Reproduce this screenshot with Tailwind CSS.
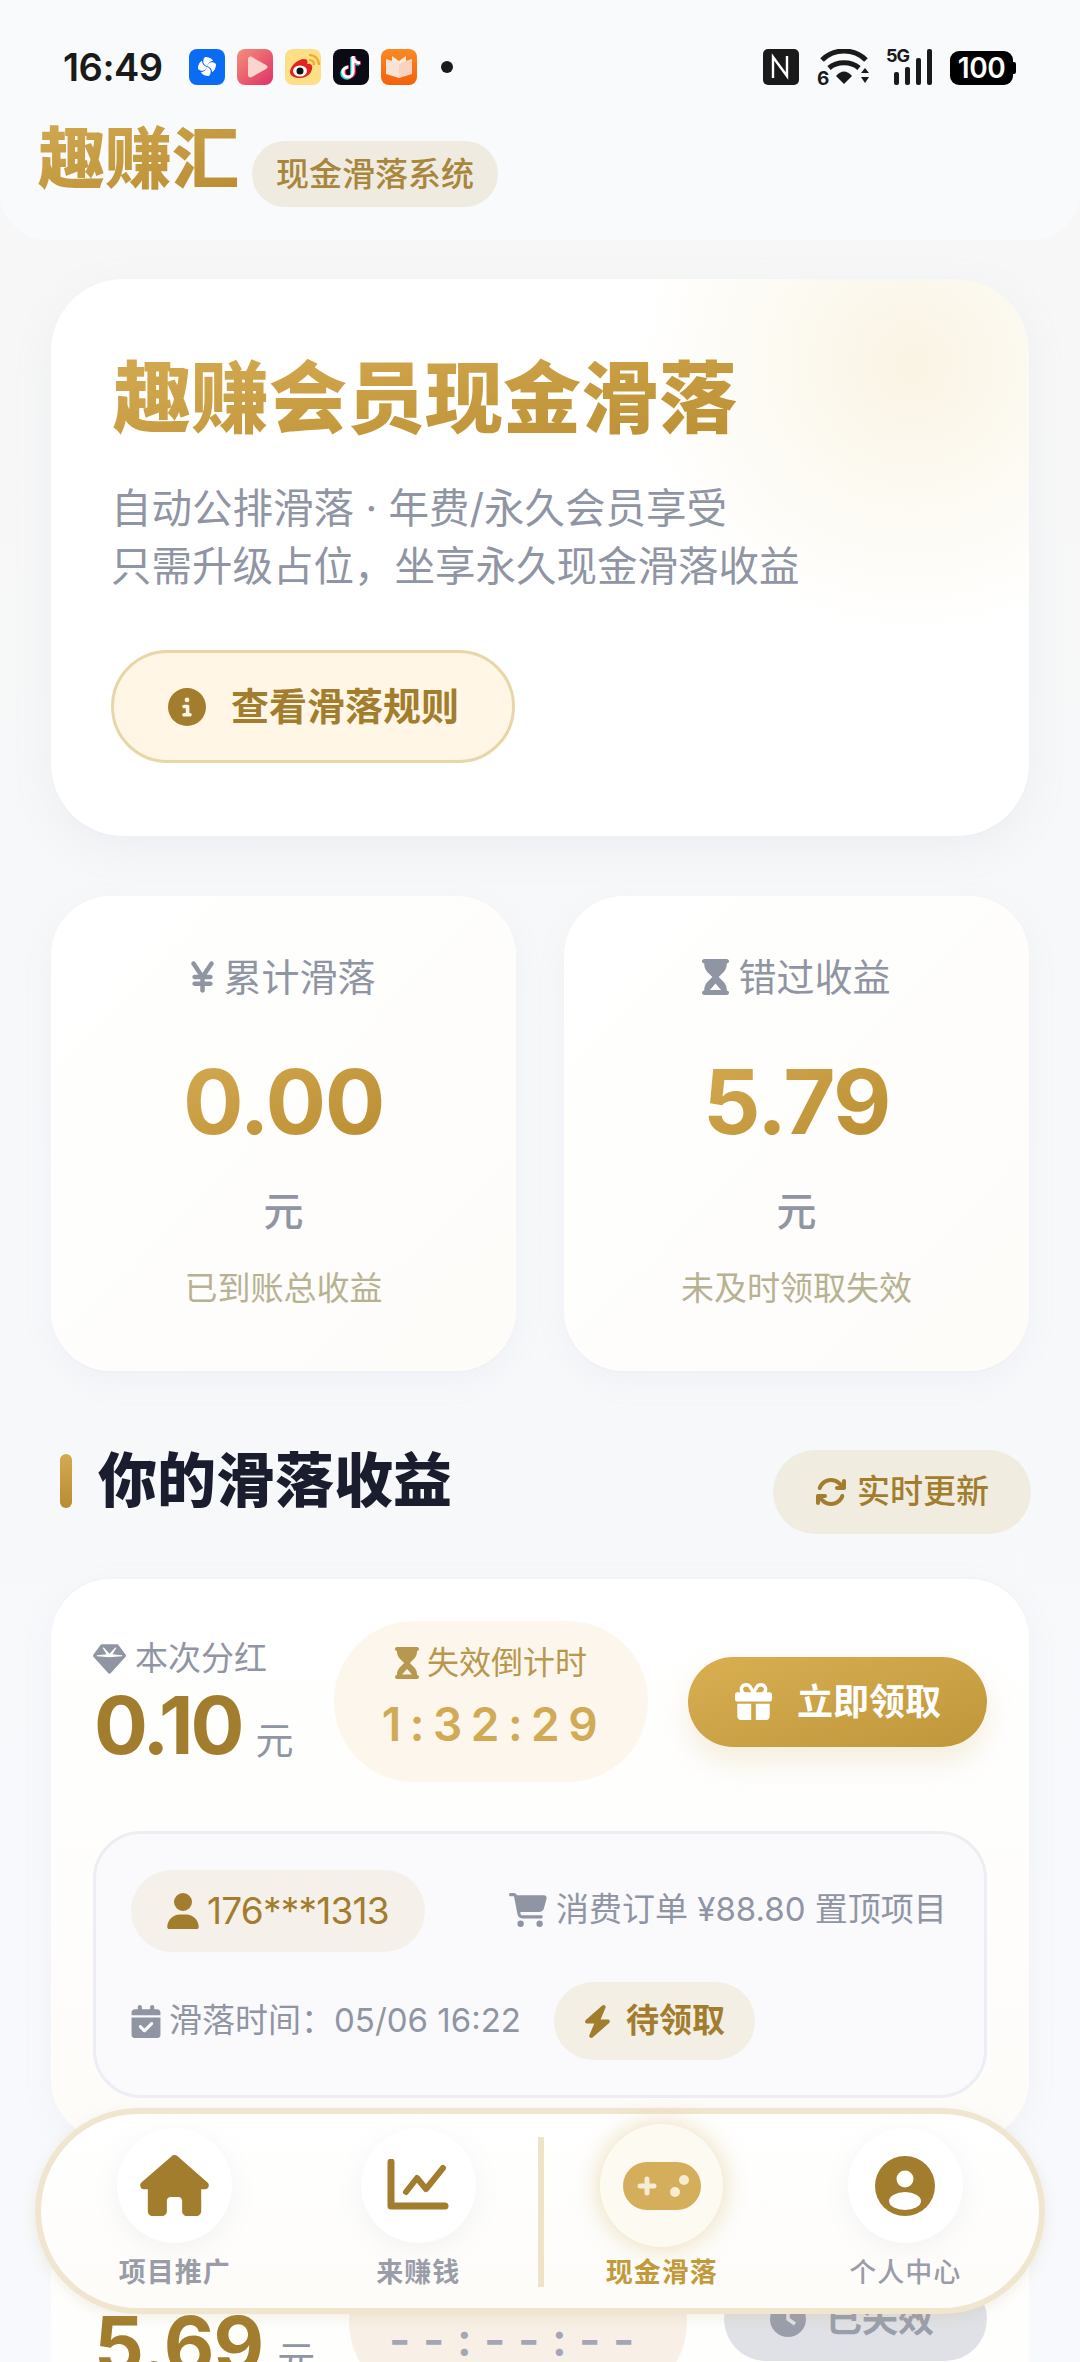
<!DOCTYPE html>
<html lang="zh">
<head>
<meta charset="utf-8">
<script src="https://cdn.jsdelivr.net/npm/@tailwindcss/browser@4"></script>
</head>
<body class="m-0">
<div class="relative w-[1080px] h-[2362px] overflow-hidden bg-linear-to-b from-[#f7f7f6] via-[#f7f8fa] to-[#f8f9fc] font-['Inter','Noto_Sans_CJK_SC',sans-serif]">

  <!-- header -->
  <header class="h-[240px] bg-[#f9fafc] rounded-b-[48px] pl-[38px]">
    <div class="h-[110px] flex items-start pt-[49px] relative">
      <span class="w-[126px] ml-[25px] h-[36px] leading-[36px] text-[38px] font-semibold text-[#1a1a1a] tracking-[-0.5px]">16:49</span>
      <div class="flex gap-[12px]">
        <svg class="w-[36px] h-[36px]" viewBox="0 0 36 36"><rect width="36" height="36" rx="8" fill="#0a6cf5"/><g fill="#fff"><path d="M18 17c-4-1-5-6-2-9 3 0 7 1 8 4-3 0-5 2-6 5z"/><path d="M18 17c1-4 6-5 9-2 0 3-1 7-4 8 0-3-2-5-5-6z"/><path d="M18 18c4 1 5 6 2 9-3 0-7-1-8-4 3 0 5-2 6-5z"/><path d="M18 18c-1 4-6 5-9 2 0-3 1-7 4-8 0 3 2 5 5 6z"/></g></svg>
        <svg class="w-[36px] h-[36px]" viewBox="0 0 36 36"><defs><linearGradient id="pg" x1="0" y1="0" x2="1" y2="1"><stop offset="0" stop-color="#f68f77"/><stop offset="1" stop-color="#dd3168"/></linearGradient></defs><rect width="36" height="36" rx="8" fill="url(#pg)"/><path d="M11 10c0-2 2-3 4-2l14 8c2 1 2 3 0 4l-14 8c-2 1-4 0-4-2z" fill="#fbd4cf"/></svg>
        <svg class="w-[36px] h-[36px]" viewBox="0 0 36 36"><rect width="36" height="36" rx="8" fill="#fddf86"/><path d="M5 23c0-6 8-13 14-13 4 0 4 3 3 5 4-1 6 2 5 5-1 6-7 9-12 9-5 0-10-2-10-6z" fill="#e3231f"/><ellipse cx="15" cy="22" rx="7" ry="5.5" fill="#fff"/><circle cx="15" cy="22" r="3.5" fill="#111"/><path d="M24 11c3 0 5 2 5 5M24 6c6 0 10 4 10 10" stroke="#f5a623" stroke-width="2" fill="none"/></svg>
        <svg class="w-[36px] h-[36px]" viewBox="0 0 36 36"><rect width="36" height="36" rx="8" fill="#0b0b16"/><path d="M20 7v16a5 5 0 1 1-5-5M20 7c0 4 3 7 7 7" stroke="#23e0e0" stroke-width="3.5" fill="none" transform="translate(-1 1)"/><path d="M20 7v16a5 5 0 1 1-5-5M20 7c0 4 3 7 7 7" stroke="#fe2c55" stroke-width="3.5" fill="none" transform="translate(1 0)"/><path d="M20 7v16a5 5 0 1 1-5-5M20 7c0 4 3 7 7 7" stroke="#fff" stroke-width="3" fill="none"/></svg>
        <svg class="w-[36px] h-[36px]" viewBox="0 0 36 36"><defs><linearGradient id="og" x1="0" y1="0" x2="0" y2="1"><stop offset="0" stop-color="#fb8a22"/><stop offset="1" stop-color="#f4600c"/></linearGradient></defs><rect width="36" height="36" rx="8" fill="url(#og)"/><path d="M5 10l13 4v15L5 25z" fill="#fbe2d2"/><path d="M31 10l-13 4v15l13-4z" fill="#f8d3bf"/><path d="M11 7l7 5 7-5v5l-7 3-7-3z" fill="#fcecdf"/></svg>
      </div>
      <span class="ml-[24px] mt-[12px] w-[12px] h-[12px] rounded-full bg-[#1a1a1a]"></span>
      <div class="absolute top-[49px] left-[725px] flex items-start">
        <svg class="w-[36px] h-[36px]" viewBox="0 0 36 36"><rect width="36" height="36" rx="5" fill="#1a1a1a"/><path d="M10 29V8l14 19V7" stroke="#fff" stroke-width="2.4" fill="none"/></svg>
        <svg class="ml-[18px] w-[54px] h-[36px]" viewBox="0 0 54 36"><path d="M5 11c12-12 32-12 44 0M12 19c8-7 22-7 30 0" stroke="#1a1a1a" stroke-width="5" fill="none"/><path d="M19 27c5-6 11-6 16 0l-8 8z" fill="#1a1a1a"/><text x="0" y="36" font-size="19" font-weight="700" fill="#1a1a1a" font-family="Inter">6</text><path d="M44 24l4-5 4 5zM44 28l4 6 4-6z" fill="#1a1a1a"/></svg>
        <div class="relative ml-[15px] w-[47px] h-[36px]">
          <span class="absolute left-0 top-[-3px] text-[18px] leading-[20px] font-bold text-[#1a1a1a] tracking-[-1px]">5G</span>
          <span class="absolute left-[8px] bottom-0 w-[5px] h-[13px] rounded-[2px] bg-[#1a1a1a]"></span>
          <span class="absolute left-[19px] bottom-0 w-[5px] h-[18px] rounded-[2px] bg-[#1a1a1a]"></span>
          <span class="absolute left-[30px] bottom-0 w-[5px] h-[27px] rounded-[2px] bg-[#1a1a1a]"></span>
          <span class="absolute left-[41px] bottom-0 w-[5px] h-[36px] rounded-[2px] bg-[#1a1a1a]"></span>
        </div>
        <div class="ml-[17px] mt-[2px] flex items-center">
          <span class="w-[63px] h-[34px] rounded-[9px] bg-black text-white text-[28px] leading-[34px] font-semibold text-center tracking-[-0.5px]">100</span>
          <span class="w-[3px] h-[12px] rounded-r-[2px] bg-black"></span>
        </div>
      </div>
    </div>
    <div class="flex items-start">
      <h1 class="text-[67px] leading-[70px] mt-[14px] font-black w-[214px] bg-linear-to-br from-[#d0a850] to-[#b98c30] bg-clip-text text-transparent">趣赚汇</h1>
      <span class="mt-[31px] h-[66px] w-[246px] rounded-full bg-[#f0ebe0] text-[33px] leading-[66px] text-center text-[#a8863c] font-medium">现金滑落系统</span>
    </div>
  </header>

  <main class="px-[51px]">
    <!-- hero -->
    <section class="mt-[39px] h-[557px] rounded-[72px] bg-white bg-[radial-gradient(circle_at_88%_15%,#faf4e4_0%,#fcf9f0_12%,#ffffff00_28%)] shadow-[0_2px_0_#eef0f6,0_12px_40px_rgba(150,160,190,0.10)] pl-[62px] pt-[75px]">
      <h2 class="text-[78px] leading-[90px] font-black w-fit bg-linear-to-br from-[#d4aa50] to-[#bb8f33] bg-clip-text text-transparent">趣赚会员现金滑落</h2>
      <p class="mt-[36px] -ml-[2px] text-[40.5px] leading-[58px] text-[#8f95a3]">自动公排滑落 · 年费/永久会员享受<br>只需升级占位，坐享永久现金滑落收益</p>
      <button class="mt-[54px] -ml-[2px] w-[404px] h-[113px] rounded-full border-[3px] border-[#e8d6a8] bg-[#fff6e6] flex items-center pl-[54px] gap-[25px] text-[38px] font-bold text-[#a27d2d]">
        <svg class="w-[38px] h-[38px]" viewBox="0 0 512 512" fill="#a27d2d"><path d="M256 512A256 256 0 1 0 256 0a256 256 0 1 0 0 512zM216 336h24V272H216c-13.3 0-24-10.7-24-24s10.7-24 24-24h48c13.3 0 24 10.7 24 24v88h8c13.3 0 24 10.7 24 24s-10.7 24-24 24H216c-13.3 0-24-10.7-24-24s10.7-24 24-24zm40-208a32 32 0 1 1 0 64 32 32 0 1 1 0-64z"/></svg>
        查看滑落规则
      </button>
    </section>

    <!-- stats -->
    <section class="mt-[60px] grid grid-cols-2 gap-[48px]">
      <div class="h-[475px] rounded-[60px] bg-linear-to-br from-white to-[#fdfcf9] shadow-[0_2px_0_#f0f1f6,0_10px_30px_rgba(150,160,190,0.08)] flex flex-col items-center pt-[56px]">
        <div class="h-[50px] flex items-center gap-[9px] text-[38px] text-[#8f95a3]">
          <svg class="w-[23px] h-[36px]" viewBox="0 0 320 512" fill="#8f95a3"><path d="M58.6 46.2C48.8 31.5 29 27.5 14.2 37.4S-4.5 67 5.4 81.8L100.2 224H48c-17.7 0-32 14.3-32 32s14.3 32 32 32h80v32H48c-17.7 0-32 14.3-32 32s14.3 32 32 32h80v64c0 17.7 14.3 32 32 32s32-14.3 32-32V384h80c17.7 0 32-14.3 32-32s-14.3-32-32-32H192V288h80c17.7 0 32-14.3 32-32s-14.3-32-32-32H219.8L314.6 81.8c9.8-14.7 5.9-34.6-8.9-44.4s-34.6-5.9-44.4 8.9L160 198.3 58.6 46.2z"/></svg>
          累计滑落
        </div>
        <div class="mt-[50px] h-[100px] leading-[100px] text-[90px] font-bold tracking-[-1.5px] w-fit bg-linear-to-br from-[#d4aa50] to-[#b98c30] bg-clip-text text-transparent">0.00</div>
        <div class="mt-[35px] h-[50px] leading-[50px] text-[40px] font-medium text-[#8f95a3]">元</div>
        <div class="mt-[28px] h-[46px] leading-[46px] text-[33px] text-[#b7b292]">已到账总收益</div>
      </div>
      <div class="h-[475px] rounded-[60px] bg-linear-to-br from-white to-[#fdfcf9] shadow-[0_2px_0_#f0f1f6,0_10px_30px_rgba(150,160,190,0.08)] flex flex-col items-center pt-[56px]">
        <div class="h-[50px] flex items-center gap-[9px] text-[38px] text-[#8f95a3]">
          <svg class="w-[27px] h-[36px]" viewBox="0 0 384 512" fill="#8f95a3" fill-rule="evenodd"><path d="M32 0h320c17 0 32 14 32 32s-14 32-32 32v11c0 42-17 83-47 113l-68 68 68 68c30 30 47 71 47 113v11c17 0 32 14 32 32s-14 32-32 32H32c-17 0-32-14-32-32s14-32 32-32v-11c0-42 17-83 47-113l68-68-68-68C49 158 32 117 32 75V64C14 64 0 50 0 32S14 0 32 0zM112 440h160L192 350z"/></svg>
          错过收益
        </div>
        <div class="mt-[50px] h-[100px] leading-[100px] text-[90px] font-bold tracking-[-1.5px] w-fit bg-linear-to-br from-[#d4aa50] to-[#b98c30] bg-clip-text text-transparent">5.79</div>
        <div class="mt-[35px] h-[50px] leading-[50px] text-[40px] font-medium text-[#8f95a3]">元</div>
        <div class="mt-[28px] h-[46px] leading-[46px] text-[33px] text-[#b7b292]">未及时领取失效</div>
      </div>
    </section>

    <!-- section head -->
    <section class="mt-[79px] flex items-center justify-between h-[84px] pl-[9px] -mr-[2px]">
      <div class="flex items-center gap-[26px] -mt-[22px]">
        <span class="w-[12px] h-[54px] rounded-full bg-linear-to-b from-[#d4aa50] to-[#b98c30]"></span>
        <h3 class="text-[59px] leading-[70px] font-black text-[#1a1d2e]">你的滑落收益</h3>
      </div>
      <div class="w-[258px] h-[84px] rounded-full bg-[#f0ede0] flex items-center justify-center gap-[10px] text-[33px] font-medium text-[#a27d2d]">
        <svg class="w-[32px] h-[32px]" viewBox="0 0 512 512" fill="#a27d2d"><path d="M105.1 202.6c7.7-21.8 20.2-42.3 37.8-59.8c62.5-62.5 163.8-62.5 226.3 0L386.3 160H352c-17.7 0-32 14.3-32 32s14.3 32 32 32H463.5c0 0 0 0 0 0h.4c17.7 0 32-14.3 32-32V80c0-17.7-14.3-32-32-32s-32 14.3-32 32v35.2L414.4 97.6c-87.5-87.5-229.3-87.5-316.8 0C73.2 122 55.6 150.7 44.8 181.4c-5.9 16.7 2.9 34.9 19.5 40.8s34.9-2.9 40.8-19.5zM39 289.3c-5 1.5-9.8 4.2-13.7 8.2c-4 4-6.7 8.8-8.1 14c-.3 1.2-.6 2.5-.8 3.8c-.3 1.7-.4 3.4-.4 5.1V432c0 17.7 14.3 32 32 32s32-14.3 32-32V396.9l17.6 17.5 0 0c87.5 87.4 229.3 87.4 316.7 0c24.4-24.4 42.1-53.1 52.9-83.7c5.9-16.7-2.9-34.9-19.5-40.8s-34.9 2.9-40.8 19.5c-7.7 21.8-20.2 42.3-37.8 59.8c-62.5 62.5-163.8 62.5-226.3 0l-.1-.1L125.6 352H160c17.7 0 32-14.3 32-32s-14.3-32-32-32H48.4c-1.6 0-3.2 .1-4.8 .3s-3.1 .5-4.6 1z"/></svg>
        实时更新
      </div>
    </section>

    <!-- order card 1 -->
    <article class="mt-[45px] h-[561px] rounded-[60px] bg-linear-to-b from-white to-[#fdfcf9] shadow-[0_-2px_0_#f3f4f8,0_8px_30px_rgba(150,160,190,0.08)] px-[42px] pt-[42px]">
      <div class="flex items-center h-[161px]">
        <div class="w-[241px] flex flex-col">
          <div class="h-[44px] flex items-center gap-[9px] text-[33px] text-[#8f95a3] mt-[2px]">
            <svg class="w-[33px] h-[30px]" viewBox="0 24 512 456" fill="#8f95a3"><path d="M116.7 33.8c4.5-6.1 11.7-9.8 19.3-9.8H376c7.6 0 14.8 3.6 19.3 9.8l112 152c6.8 9.2 6.1 21.9-1.5 30.4l-232 256c-4.5 5-11 7.9-17.8 7.9s-13.2-2.9-17.8-7.9l-232-256c-7.7-8.5-8.3-21.2-1.5-30.4l112-152zm38.5 39.8c-3.3 2.5-4.2 7-2.1 10.5l57.4 95.6L63.3 192c-4.1 .3-7.3 3.8-7.3 8s3.2 7.6 7.3 8l192 16c.4 0 .9 0 1.3 0l192-16c4.1-.3 7.3-3.8 7.3-8s-3.2-7.6-7.3-8L301.5 179.8l57.4-95.6c2.1-3.5 1.2-8.1-2.1-10.5s-7.9-2-10.7 1L256 172.2 165.9 74.6c-2.8-3-7.4-3.4-10.7-1z"/></svg>
            本次分红
          </div>
          <div class="flex items-baseline">
            <span class="text-[80px] leading-[88px] font-bold text-[#a27d2d] tracking-[-3px] ml-[1px]">0.10</span>
            <span class="ml-[14px] text-[38px] text-[#8f95a3]">元</span>
          </div>
        </div>
        <div class="w-[314px] h-[161px] rounded-[80px] bg-[#fdf6ec] flex flex-col items-center pt-[22px]">
          <div class="h-[40px] flex items-center gap-[8px] text-[32px] text-[#b8974e]">
            <svg class="w-[24px] h-[32px]" viewBox="0 0 384 512" fill="#b8974e" fill-rule="evenodd"><path d="M32 0h320c17 0 32 14 32 32s-14 32-32 32v11c0 42-17 83-47 113l-68 68 68 68c30 30 47 71 47 113v11c17 0 32 14 32 32s-14 32-32 32H32c-17 0-32-14-32-32s14-32 32-32v-11c0-42 17-83 47-113l68-68-68-68C49 158 32 117 32 75V64C14 64 0 50 0 32S14 0 32 0zM112 440h160L192 350z"/></svg>
            失效倒计时
          </div>
          <div class="mt-[11px] ml-[6px] h-[60px] leading-[60px] text-[46px] font-semibold text-[#d0aa55] tracking-[8.5px] whitespace-nowrap">1:32:29</div>
        </div>
        <button class="ml-[40px] w-[299px] h-[90px] rounded-full bg-linear-to-br from-[#d9af52] to-[#bf963a] shadow-[0_14px_28px_rgba(200,160,70,0.18)] flex items-center pl-[47px] gap-[25px] text-[36px] font-bold text-white">
          <svg class="w-[37px] h-[37px]" viewBox="0 0 512 512" fill="#fff"><path d="M190.5 68.8L225.3 128H224 152c-22.1 0-40-17.9-40-40s17.9-40 40-40h2.2c14.9 0 28.8 7.9 36.3 20.8zM64 88c0 14.4 3.5 28 9.6 40H32c-17.7 0-32 14.3-32 32v64c0 17.7 14.3 32 32 32H480c17.7 0 32-14.3 32-32V160c0-17.7-14.3-32-32-32H438.4c6.1-12 9.6-25.6 9.6-40c0-48.6-39.4-88-88-88h-2.2c-31.9 0-61.5 16.9-77.7 44.4L256 85.5l-24.1-41C215.7 16.9 186.1 0 154.2 0H152C103.4 0 64 39.4 64 88zm336 0c0 22.1-17.9 40-40 40H288h-1.3l34.8-59.2C329.1 55.9 342.9 48 357.8 48H360c22.1 0 40 17.9 40 40zM32 288V464c0 26.5 21.5 48 48 48H224V288H32zM288 512H432c26.5 0 48-21.5 48-48V288H288V512z"/></svg>
          立即领取
        </button>
      </div>
      <div class="mt-[49px] h-[267px] rounded-[48px] bg-[#fafafd] border-[3px] border-[#eceef3] pl-[35px] pt-[36px]">
        <div class="flex items-center h-[82px]">
          <div class="w-[294px] h-[82px] rounded-full bg-[#f5f1ea] flex items-center pl-[36px] gap-[8px] text-[37px] text-[#a27d2d] tracking-[-0.8px] whitespace-nowrap">
            <svg class="w-[32px] h-[36px]" viewBox="0 0 448 512" fill="#a27d2d"><path d="M224 256A128 128 0 1 0 224 0a128 128 0 1 0 0 256zm-45.7 48C79.8 304 0 383.8 0 482.3C0 498.7 13.3 512 29.7 512H418.3c16.4 0 29.7-13.3 29.7-29.7C448 383.8 368.2 304 269.7 304H178.3z"/></svg>
            176***1313
          </div>
          <div class="ml-[84px] flex items-center gap-[9px] text-[33px] text-[#8f95a3] whitespace-nowrap -mt-[2px]">
            <svg class="w-[38px] h-[34px]" viewBox="0 0 576 512" fill="#8f95a3"><path d="M0 24C0 10.7 10.7 0 24 0H69.5c22 0 41.5 12.8 50.6 32h411c26.3 0 45.5 25 38.6 50.4l-41 152.3c-8.5 31.4-37 53.3-69.5 53.3H170.7l5.4 28.5c2.2 11.3 12.1 19.5 23.6 19.5H488c13.3 0 24 10.7 24 24s-10.7 24-24 24H199.7c-34.6 0-64.3-24.6-70.7-58.5L77.4 54.5c-.7-3.8-4-6.5-7.9-6.5H24C10.7 48 0 37.3 0 24zM128 464a48 48 0 1 1 96 0 48 48 0 1 1 -96 0zm336-48a48 48 0 1 1 0 96 48 48 0 1 1 0-96z"/></svg>
            消费订单 ¥88.80 置顶项目
          </div>
        </div>
        <div class="flex items-center h-[78px] mt-[30px]">
          <div class="flex items-center gap-[8px] text-[33px] text-[#8f95a3] w-[423px] whitespace-nowrap">
            <svg class="w-[30px] h-[33px]" viewBox="0 0 448 512" fill="#8f95a3"><path d="M128 0c17.7 0 32 14.3 32 32V64H288V32c0-17.7 14.3-32 32-32s32 14.3 32 32V64h48c26.5 0 48 21.5 48 48v48H0V112C0 85.5 21.5 64 48 64H96V32c0-17.7 14.3-32 32-32zM0 192H448V464c0 26.5-21.5 48-48 48H48c-26.5 0-48-21.5-48-48V192zM329 305c9.4-9.4 9.4-24.6 0-33.9s-24.6-9.4-33.9 0l-95 95-47-47c-9.4-9.4-24.6-9.4-33.9 0s-9.4 24.6 0 33.9l64 64c9.4 9.4 24.6 9.4 33.9 0L329 305z"/></svg>
            滑落时间：05/06 16:22
          </div>
          <div class="w-[201px] h-[78px] rounded-full bg-[#f3efe5] flex items-center pl-[30px] gap-[15px] text-[33px] font-bold text-[#a27d2d]">
            <svg class="w-[27px] h-[33px]" viewBox="30 0 390 512" fill="#a27d2d"><path d="M349.4 44.6c5.9-13.7 1.5-29.7-10.6-38.5s-28.6-8-39.9 1.8l-256 224c-10 8.8-13.6 22.9-8.9 35.3S50.7 288 64 288H175.5L98.6 467.4c-5.9 13.7-1.5 29.7 10.6 38.5s28.6 8 39.9-1.8l256-224c10-8.8 13.6-22.9 8.9-35.3s-16.6-20.7-30-20.7H272.5L349.4 44.6z"/></svg>
            待领取
          </div>
        </div>
      </div>
    </article>

    <!-- order card 2 -->
    <article class="mt-[59px] h-[400px] rounded-[60px] bg-linear-to-b from-white to-[#fdfcf9] px-[42px] pt-[42px]">
      <div class="flex items-center h-[161px]">
        <div class="w-[256px] flex flex-col">
          <div class="h-[44px] mt-[2px]"></div>
          <div class="flex items-baseline">
            <span class="text-[78px] leading-[88px] font-bold text-[#a27d2d] tracking-[-1px] ml-[1px]">5.69</span>
            <span class="ml-[14px] text-[38px] text-[#8f95a3]">元</span>
          </div>
        </div>
        <div class="w-[338px] h-[161px] rounded-[80px] bg-[#f8f0e6] flex flex-col items-center pt-[65px]">
          <div class="mt-[3px] h-[60px] leading-[60px] text-[46px] font-semibold text-[#a3a7b3] tracking-[12.5px] whitespace-nowrap">--:--:--</div>
        </div>
        <button class="ml-[37px] w-[263px] h-[84px] -mt-[6px] rounded-[42px] bg-[#dfe1e6] flex items-center pl-[46px] gap-[20px] text-[36px] font-bold text-[#9a9eaa]">
          <svg class="w-[36px] h-[36px]" viewBox="0 0 36 36"><circle cx="18" cy="18" r="18" fill="#9a9eaa"/><path d="M18 8v10l7 5" stroke="#dfe1e6" stroke-width="3.5" fill="none"/></svg>
          已失效
        </button>
      </div>
    </article>
  </main>

  <!-- floating nav -->
  <nav class="absolute left-[35px] top-[2108px] w-[1010px] h-[206px] rounded-[103px] border-[6px] border-[#f0e6cf] bg-linear-to-b from-white to-[#fdfcf9] shadow-[0_4px_14px_rgba(190,170,120,0.18)] flex px-[12px] pt-[14px]">
    <a class="w-[244px] flex flex-col items-center">
      <span class="w-[115px] h-[115px] rounded-full bg-white shadow-[0_6px_24px_rgba(150,150,170,0.10)] flex items-center justify-center">
        <svg class="w-[69px] h-[61px]" viewBox="0 0 576 512" fill="#a27d2d"><path d="M575.8 255.5c0 18-15 32.1-32 32.1h-32l.7 160.2c0 2.7-.2 5.4-.5 8.1V472c0 22.1-17.9 40-40 40H456c-1.1 0-2.2 0-3.3-.1c-1.4 .1-2.8 .1-4.2 .1H416 392c-22.1 0-40-17.9-40-40V448 384c0-17.7-14.3-32-32-32H256c-17.7 0-32 14.3-32 32v64 24c0 22.1-17.9 40-40 40H160 128.1c-1.5 0-3-.1-4.5-.2c-1.2 .1-2.4 .2-3.6 .2H104c-22.1 0-40-17.9-40-40V360c0-.9 0-1.9 .1-2.8V287.6H32c-18 0-32-14-32-32.1c0-9 3-17 10-24L266.4 8c7-7 15-8 22-8s15 2 21 7L564.8 231.5c8 7 12 15 11 24z"/></svg>
      </span>
      <span class="mt-[10px] h-[40px] leading-[40px] text-[27px] font-bold text-[#9a9da8] tracking-[1px]">项目推广</span>
    </a>
    <a class="w-[244px] flex flex-col items-center">
      <span class="w-[115px] h-[115px] rounded-full bg-white shadow-[0_6px_24px_rgba(150,150,170,0.10)] flex items-center justify-center">
        <svg class="w-[62px] h-[54px]" viewBox="0 0 62 54" fill="none" stroke="#a27d2d" stroke-linecap="round" stroke-linejoin="round"><path d="M4 3v44h54" stroke-width="7"/><path d="M19 33l11-14 9 11 17-21" stroke-width="6"/></svg>
      </span>
      <span class="mt-[10px] h-[40px] leading-[40px] text-[27px] font-bold text-[#9a9da8] tracking-[1px]">来赚钱</span>
    </a>
    <span class="absolute left-[497px] top-[23px] w-[6px] h-[150px] bg-[#efe3c6]"></span>
    <a class="w-[244px] flex flex-col items-center -mt-[4px]">
      <span class="w-[123px] h-[123px] rounded-full bg-[#fdfaf1] shadow-[0_0_26px_rgba(210,175,95,0.45)] flex items-center justify-center">
        <svg class="w-[78px] h-[48px]" viewBox="0 0 78 48"><rect width="78" height="48" rx="24" fill="#d5ae5c"/><path d="M17 24h14M24 17v14" stroke="#f6ecd2" stroke-width="5" stroke-linecap="round"/><circle cx="61" cy="18" r="5" fill="#f6ecd2"/><circle cx="52" cy="30" r="5" fill="#f6ecd2"/></svg>
      </span>
      <span class="mt-[6px] h-[40px] leading-[40px] text-[27px] font-bold text-[#c29a3c] tracking-[1px]">现金滑落</span>
    </a>
    <a class="w-[244px] flex flex-col items-center">
      <span class="w-[115px] h-[115px] rounded-full bg-white shadow-[0_6px_24px_rgba(150,150,170,0.10)] flex items-center justify-center">
        <svg class="w-[60px] h-[60px]" viewBox="0 0 60 60"><circle cx="30" cy="30" r="30" fill="#a27d2d"/><circle cx="30" cy="23" r="8.5" fill="#fff"/><ellipse cx="30" cy="45" rx="16" ry="9" fill="#fff"/></svg>
      </span>
      <span class="mt-[10px] h-[40px] leading-[40px] text-[27px] font-medium text-[#9a9da8] tracking-[1px]">个人中心</span>
    </a>
  </nav>
</div>
</body>
</html>
